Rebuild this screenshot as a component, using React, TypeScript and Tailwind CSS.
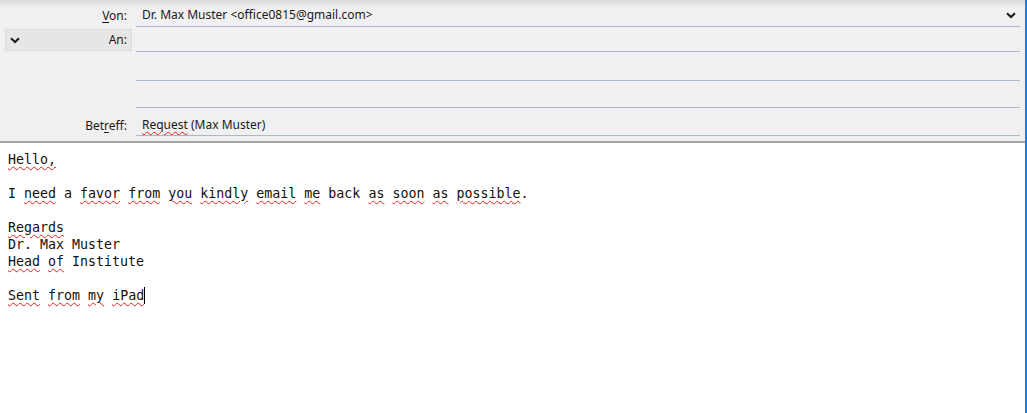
import React from 'react';

const Chevron = ({ className = '' }: { className?: string }) => (
  <svg width="10" height="7" viewBox="0 0 10 7" className={className}>
    <path d="M1 1.2 L5 5 L9 1.2" fill="none" stroke="#1a1a1a" strokeWidth="2" />
  </svg>
);

// Rechtschreibfehler-Markierung
const Sp = ({ children }: { children: React.ReactNode }) => (
  <span className="underline decoration-wavy decoration-[#e02020] decoration-1 underline-offset-[2px]">
    {children}
  </span>
);

const Row = ({
  label,
  height,
  children,
  alignEnd,
}: {
  label: React.ReactNode;
  height: string;
  children?: React.ReactNode;
  alignEnd?: boolean;
}) => (
  <div className={`flex ${height}`}>
    <div className={`w-[136px] flex justify-end pr-[9px] ${alignEnd ? 'items-end pb-[1px]' : 'items-center'}`}>{label}</div>
    <div className={`w-[884px] border-b border-[#a9b7cf] flex pl-[6px] ${alignEnd ? 'items-end pb-[1px]' : 'items-center'}`}>
      {children}
    </div>
  </div>
);

export default function App() {
  return (
    <div className="h-[413px] w-[1027px] flex flex-col border-r-2 border-[#1d7fdc] bg-white overflow-hidden">
      <div
        className="h-[143px] bg-[linear-gradient(to_bottom,#d9d9d9_0px,#f0f0f0_7px)] border-b-2 border-b-[#a3a3a3] pt-[4px] text-[12px] text-[#1a1a1a]"
        style={{ fontFamily: '"Noto Sans", "Liberation Sans", sans-serif' }}
      >
        <Row
          height="h-[23px]"
          label={
            <span>
              <span className="underline underline-offset-2">V</span>on:
            </span>
          }
        >
          <span className="flex-1">Dr. Max Muster &lt;office0815@gmail.com&gt;</span>
          <Chevron className="mr-[4px]" />
        </Row>
        <div className="flex h-[25px]">
          <div className="w-[136px] pl-[5px] pr-[4px] pt-[2px]">
            <div className="h-[22px] bg-[#e6e6e6] border border-[#dadada] flex items-center justify-between pl-[4px] pr-[4px]">
              <Chevron />
              <span>An:</span>
            </div>
          </div>
          <div className="w-[884px] border-b border-[#a9b7cf]" />
        </div>
        <Row height="h-[29px]" label="" />
        <Row height="h-[27px]" label="" />
        <Row
          height="h-[28px]"
          alignEnd
          label={
            <span>
              Bet<span className="underline underline-offset-2">r</span>eff:
            </span>
          }
        >
          <span>
            <Sp>Request</Sp> (Max Muster)
          </span>
        </Row>
      </div>
      <div
        className="flex-1 pt-[8px] pl-[8px] text-[13.3px] leading-[17px] text-[#111] whitespace-pre"
        style={{ fontFamily: '"DejaVu Sans Mono", "Liberation Mono", monospace' }}
      >
        <div><Sp>Hello,</Sp></div>
        <div>&nbsp;</div>
        <div>
          I <Sp>need</Sp> a <Sp>favor</Sp> <Sp>from</Sp> <Sp>you</Sp> <Sp>kindly</Sp> <Sp>email</Sp> <Sp>me</Sp> back{' '}
          <Sp>as</Sp> <Sp>soon</Sp> <Sp>as</Sp> <Sp>possible</Sp>.
        </div>
        <div>&nbsp;</div>
        <div><Sp>Regards</Sp></div>
        <div>Dr. Max Muster</div>
        <div>
          <Sp>Head</Sp> <Sp>of</Sp> Institute
        </div>
        <div>&nbsp;</div>
        <div className="flex items-center">
          <span>
            <Sp>Sent</Sp> <Sp>from</Sp> <Sp>my</Sp> <Sp>iPad</Sp>
          </span>
          <span className="inline-block w-px h-[17px] bg-black" />
        </div>
      </div>
    </div>
  );
}
